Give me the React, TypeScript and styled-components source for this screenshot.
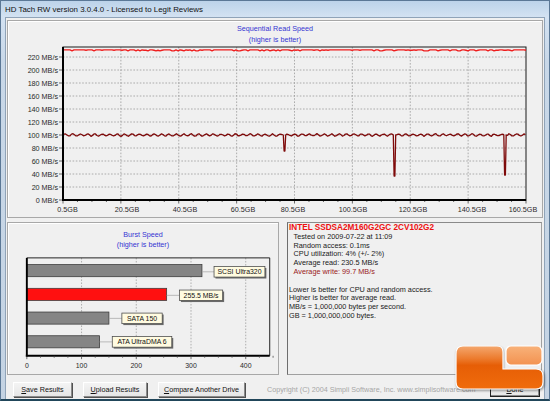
import styled, { createGlobalStyle } from 'styled-components';

const GlobalStyle = createGlobalStyle`
  html, body {
    margin: 0;
    padding: 0;
    background: #ffffff;
  }
  body {
    width: 550px;
    height: 401px;
    overflow: hidden;
    font-family: "Liberation Sans", Arial, sans-serif;
  }
`;

const Window = styled.div`
  position: relative;
  width: 550px;
  height: 401px;
  box-sizing: border-box;
  display: flex;
  flex-direction: column;
  background: linear-gradient(to bottom, #bcd3ea 0px, #d3e2f2 16px, #c9d8e8 60px, #c4d3e3 100%);
  border: 1px solid #5b7896;
  border-bottom: 2px solid #21465a;
`;

const TitleBar = styled.div`
  height: 16px;
  padding-left: 4px;
  display: flex;
  align-items: center;
  font-family: "Liberation Sans", Arial, sans-serif;
  font-size: 7.9px;
  color: #111;
`;

const Client = styled.div`
  flex: 1;
  margin: 0 4px;
  background: #f0f0f0;
  border: 1px solid #8fa3b8;
  border-bottom: none;
  padding: 2px 0 0 1px;
  display: flex;
  flex-direction: column;
`;

const Panel = styled.div<{ $w: number; $h: number }>`
  width: ${({ $w }) => $w}px;
  height: ${({ $h }) => $h}px;
  box-sizing: border-box;
  border: 1px solid #a8a8a8;
  box-shadow: inset 1px 1px 0 #ffffff;
  display: flex;
  flex-direction: column;
`;

const ChartTitle = styled.div<{ $pt: number; $lh: number }>`
  padding-top: ${({ $pt }) => $pt}px;
  text-align: center;
  font-size: 7.2px;
  line-height: ${({ $lh }) => $lh}px;
  color: #3434d2;
`;

const ChartSvg = styled.svg`
  display: block;
  text {
    font-family: "Liberation Sans", Arial, sans-serif;
    font-size: 7.2px;
    fill: #2a2a2a;
  }
`;

const MiddleRow = styled.div`
  margin-top: 4px;
  height: 153px;
  display: flex;
  gap: 8px;
`;

const InfoBox = styled.div`
  width: 255px;
  height: 153px;
  box-sizing: border-box;
  border: 1px solid #a0a0a0;
  border-left-color: #6e6e6e;
  border-top-color: #8a8a8a;
  padding: 1px 0 0 1px;
  font-size: 7.3px;
  line-height: 8.8px;
  color: #1a1a1a;
`;

const DriveName = styled.div`
  font-size: 8.2px;
  font-weight: bold;
  color: #ee1111;
`;

const InfoLine = styled.div<{ $indent?: boolean; $tone?: 'write' }>`
  padding-left: ${({ $indent }) => ($indent ? 4.5 : 0)}px;
  color: ${({ $tone }) => ($tone === 'write' ? '#9a2222' : '#1a1a1a')};
  white-space: nowrap;
`;

const Spacer = styled.div`
  height: 8.8px;
`;

const BottomRow = styled.div`
  padding: 7px 0 0 6px;
  display: flex;
  align-items: flex-start;
  gap: 11px;
`;

const Button = styled.button<{ $w: number; $default?: boolean }>`
  width: ${({ $w }) => $w}px;
  height: 15px;
  padding: 0;
  box-sizing: border-box;
  background: linear-gradient(#f4f4f4, #e6e6e6);
  border: 1px solid;
  border-color: ${({ $default }) =>
    $default ? '#222 #222 #222 #222' : '#ffffff #8a8a8a #8a8a8a #ffffff'};
  box-shadow: ${({ $default }) => ($default ? 'inset -1px -1px 0 #8a8a8a' : '1px 1px 0 #505050')};
  font-family: "Liberation Sans", Arial, sans-serif;
  font-size: 7.2px;
  color: #111;
  u {
    text-decoration: underline;
  }
`;

const Copyright = styled.div`
  margin-left: 11px;
  width: 212px;
  height: 15px;
  line-height: 15px;
  font-size: 7.2px;
  color: #a6a6a6;
  white-space: nowrap;
`;

const Logo = styled.svg`
  position: absolute;
  left: 453px;
  top: 342px;
`;

// sequential chart geometry (svg coords, origin at page 8,47)
const PX0 = 55;
const PX1 = 518;
const PY0 = 2;
const PY1 = 155;
const yOf = (mb: number) => PY1 - mb * 0.65;
const gridX = Array.from({ length: 9 }, (_, i) => PX0 + (i * (PX1 - PX0)) / 8);
const xLabels = ['0.5GB', '20.5GB', '40.5GB', '60.5GB', '80.5GB', '100.5GB', '120.5GB', '140.5GB', '160.5GB'];
const xLabelPos = [59.5, 119, 177, 235, 285, 345, 405, 464, 515];

function rnd(seed: number) {
  let s = seed;
  return () => {
    s = (s * 16807) % 2147483647;
    return (s - 1) / 2147483646;
  };
}

const readPath = (() => {
  const r = rnd(11);
  const pts: string[] = [];
  for (let x = PX0 + 1; x <= PX1; x += 2) {
    const v = r();
    const y = 4.8 + (v > 0.82 ? 1 : v > 0.65 ? 0.45 : 0);
    pts.push(`${x.toFixed(1)} ${y.toFixed(2)}`);
  }
  return 'M' + pts.join('L');
})();

const spikes = [
  { x: 276.5, y: 106 },
  { x: 386.5, y: 131 },
  { x: 497, y: 130 },
];

const writePath = (() => {
  const r = rnd(5);
  const base = yOf(100);
  const pts: string[] = [];
  let x = PX0 + 1;
  while (x <= PX1) {
    const sp = spikes.find((s) => Math.abs(s.x - x) < 1.6);
    if (sp) {
      pts.push(`${(sp.x - 1.2).toFixed(1)} ${base}`);
      pts.push(`${(sp.x - 0.4).toFixed(1)} ${sp.y}`);
      pts.push(`${(sp.x + 0.4).toFixed(1)} ${sp.y}`);
      pts.push(`${(sp.x + 1.2).toFixed(1)} ${base}`);
      x = sp.x + 2.4;
      continue;
    }
    const y = base + 1.1 * Math.sin((x * 2 * Math.PI) / 7.4) + (r() - 0.5) * 0.7;
    pts.push(`${x.toFixed(1)} ${y.toFixed(2)}`);
    x += 1.5;
  }
  return 'M' + pts.join('L');
})();

function SequentialChart() {
  const hLines = Array.from({ length: 11 }, (_, i) => (i + 1) * 20);
  const minor: number[] = [];
  for (let x = PX0; x <= PX1 + 0.1; x += (PX1 - PX0) / 32) minor.push(x);
  return (
    <ChartSvg width={534} height={170} viewBox="0 0 534 170">
      {hLines.map((v) => (
        <line key={v} x1={PX0} x2={PX1} y1={yOf(v)} y2={yOf(v)} stroke="#9a9a9a" strokeWidth={0.8} strokeDasharray="1.6 1.6" />
      ))}
      {gridX.slice(1, 8).map((x) => (
        <line key={x} x1={x} x2={x} y1={PY0} y2={PY1} stroke="#9a9a9a" strokeWidth={0.8} strokeDasharray="1.6 1.6" />
      ))}
      {[0, ...hLines].map((v) => (
        <g key={'l' + v}>
          <line x1={PX0 - 4} x2={PX0} y1={yOf(v)} y2={yOf(v)} stroke="#444" strokeWidth={0.8} />
          <text x={PX0 - 5} y={yOf(v) + 2.5} textAnchor="end">
            {v} MB/s
          </text>
        </g>
      ))}
      {minor.map((x, i) => (
        <line key={'m' + i} x1={x} x2={x} y1={PY1} y2={PY1 + (i % 4 === 0 ? 3.5 : 2)} stroke="#444" strokeWidth={0.8} />
      ))}
      {xLabels.map((t, i) => (
        <text key={t} x={xLabelPos[i]} y={167.3} textAnchor="middle">
          {t}
        </text>
      ))}
      <rect x={PX0} y={PY0} width={PX1 - PX0} height={PY1 - PY0} fill="none" stroke="#1a1a1a" strokeWidth={1} />
      <line x1={PX0} x2={PX0} y1={PY0} y2={PY1 + 1} stroke="#000" strokeWidth={2} />
      <line x1={PX0 - 1} x2={PX1} y1={PY1} y2={PY1} stroke="#000" strokeWidth={2} />
      <path d={writePath} fill="none" stroke="#7e0a0a" strokeWidth={1.3} strokeLinejoin="round" />
      <path d={readPath} fill="none" stroke="#ee1c1c" strokeWidth={1.3} strokeLinejoin="round" />
    </ChartSvg>
  );
}

// burst chart geometry (svg coords, origin at page 8,250)
const BX0 = 14;
const BX1 = 267;
const BY0 = 3;
const BY1 = 105;
const bx = (v: number) => BX0 + v * 0.57;

const bars = [
  { value: 320, label: 'SCSI Ultra320', red: false, box: [209, 12, 53] },
  { value: 255.5, label: '255.5 MB/s', red: true, box: [173, 36.5, 45] },
  { value: 150, label: 'SATA 150', red: false, box: [113, 60.5, 42] },
  { value: 133, label: 'ATA UltraDMA 6', red: false, box: [103, 85, 62] },
];

function BurstChart() {
  const ticks: number[] = [];
  for (let v = 0; v <= 450; v += 25) ticks.push(v);
  return (
    <ChartSvg width={270} height={124} viewBox="0 0 270 124">
      {[100, 200, 300, 400].map((v) => (
        <line key={v} x1={bx(v)} x2={bx(v)} y1={BY0} y2={BY1} stroke="#9a9a9a" strokeWidth={0.8} strokeDasharray="1.6 1.6" />
      ))}
      <line x1={BX0} x2={BX1} y1={BY0} y2={BY0} stroke="#1a1a1a" strokeWidth={1} />
      <line x1={BX1} x2={BX1} y1={BY0} y2={BY1} stroke="#1a1a1a" strokeWidth={1} />
      {bars.map((b, i) => {
        const top = 10 + i * 24.7;
        const end = bx(b.value);
        const [lx, ly, lw] = b.box;
        return (
          <g key={b.label}>
            <rect x={BX0} y={top} width={end - BX0} height={12.6} fill={b.red ? '#ff1010' : '#858585'} stroke="#3a3a3a" strokeWidth={0.8} />
            <line x1={end} x2={lx} y1={ly + 5.5} y2={ly + 5.5} stroke="#a8a8a8" strokeWidth={0.8} />
            <rect x={lx + 1.5} y={ly + 1.5} width={lw} height={11} fill="#6a6a6a" />
            <rect x={lx} y={ly} width={lw} height={11} fill="#fffbe0" stroke="#4a4a4a" strokeWidth={0.8} />
            <text x={lx + lw / 2} y={ly + 8.2} textAnchor="middle" style={{ fill: '#111' }}>
              {b.label}
            </text>
          </g>
        );
      })}
      <line x1={BX0} x2={BX0} y1={BY0} y2={BY1 + 1} stroke="#000" strokeWidth={2} />
      <line x1={BX0 - 1} x2={BX1} y1={BY1} y2={BY1} stroke="#000" strokeWidth={2} />
      {ticks.map((v) => (
        <line key={'t' + v} x1={bx(v)} x2={bx(v)} y1={BY1} y2={BY1 + (v % 100 === 0 ? 3.5 : 2)} stroke="#444" strokeWidth={0.8} />
      ))}
      {[0, 100, 200, 300, 400].map((v) => (
        <text key={'x' + v} x={bx(v)} y={117.5} textAnchor="middle">
          {v}
        </text>
      ))}
    </ChartSvg>
  );
}

function LegitLogo() {
  return (
    <Logo width={94} height={50} viewBox="0 0 94 50">
      <defs>
        <linearGradient id="lgMain" x1="0" y1="0" x2="0" y2="1">
          <stop offset="0" stopColor="#f4a76e" />
          <stop offset="0.3" stopColor="#ec7a2c" />
          <stop offset="0.45" stopColor="#e65e06" />
          <stop offset="1" stopColor="#f06c0c" />
        </linearGradient>
        <linearGradient id="lgTop" x1="0" y1="0" x2="0" y2="1">
          <stop offset="0" stopColor="#f8b27a" />
          <stop offset="1" stopColor="#f39250" />
        </linearGradient>
        <filter id="lgShadow" x="-10%" y="-10%" width="130%" height="130%">
          <feGaussianBlur stdDeviation="1.2" />
        </filter>
      </defs>
      <path
        d="M10 4 H44 Q50 4 50 10 V27 H84 Q91 27 91 34 V40 Q91 48 83 48 H10 Q2 48 2 40 V12 Q2 4 10 4 Z"
        fill="#000"
        opacity={0.35}
        filter="url(#lgShadow)"
      />
      <path
        d="M9 3 H43 Q49 3 49 9 V26 H82 Q89 26 89 33 V39 Q89 46 82 46 H9 Q2 46 2 39 V11 Q2 3 9 3 Z"
        fill="url(#lgMain)"
        stroke="#ffffff"
        strokeWidth={1.2}
      />
      <rect x={52} y={3} width={36} height={19} rx={5} fill="url(#lgTop)" stroke="#ffffff" strokeWidth={1.2} />
    </Logo>
  );
}

export default function App() {
  return (
    <>
      <GlobalStyle />
      <Window>
        <TitleBar>HD Tach RW version 3.0.4.0 - Licensed to Legit Reviews</TitleBar>
        <Client>
          <Panel $w={536} $h={198}>
            <ChartTitle $pt={3} $lh={10.5}>
              Sequential Read Speed
              <br />
              (higher is better)
            </ChartTitle>
            <SequentialChart />
          </Panel>
          <MiddleRow>
            <Panel $w={272} $h={153}>
              <ChartTitle $pt={7} $lh={9.5} style={{ height: 26 }}>
                Burst Speed
                <br />
                (higher is better)
              </ChartTitle>
              <BurstChart />
            </Panel>
            <InfoBox>
              <DriveName>INTEL SSDSA2M160G2GC 2CV102G2</DriveName>
              <InfoLine $indent>Tested on 2009-07-22 at 11:09</InfoLine>
              <InfoLine $indent>Random access: 0.1ms</InfoLine>
              <InfoLine $indent>CPU utilization: 4% (+/- 2%)</InfoLine>
              <InfoLine $indent>Average read: 230.5 MB/s</InfoLine>
              <InfoLine $indent $tone="write">
                Average write: 99.7 MB/s
              </InfoLine>
              <Spacer />
              <InfoLine>Lower is better for CPU and random access.</InfoLine>
              <InfoLine>Higher is better for average read.</InfoLine>
              <InfoLine>MB/s = 1,000,000 bytes per second.</InfoLine>
              <InfoLine>GB = 1,000,000,000 bytes.</InfoLine>
            </InfoBox>
          </MiddleRow>
          <BottomRow>
            <Button $w={59}>
              <u>S</u>ave Results
            </Button>
            <Button $w={64}>
              <u>U</u>pload Results
            </Button>
            <Button $w={87}>
              <u>C</u>ompare Another Drive
            </Button>
            <Copyright>Copyright (C) 2004 Simpli Software, Inc. www.simplisoftware.com</Copyright>
            <Button $w={50} $default>
              <u>D</u>one
            </Button>
          </BottomRow>
        </Client>
        <LegitLogo />
      </Window>
    </>
  );
}
